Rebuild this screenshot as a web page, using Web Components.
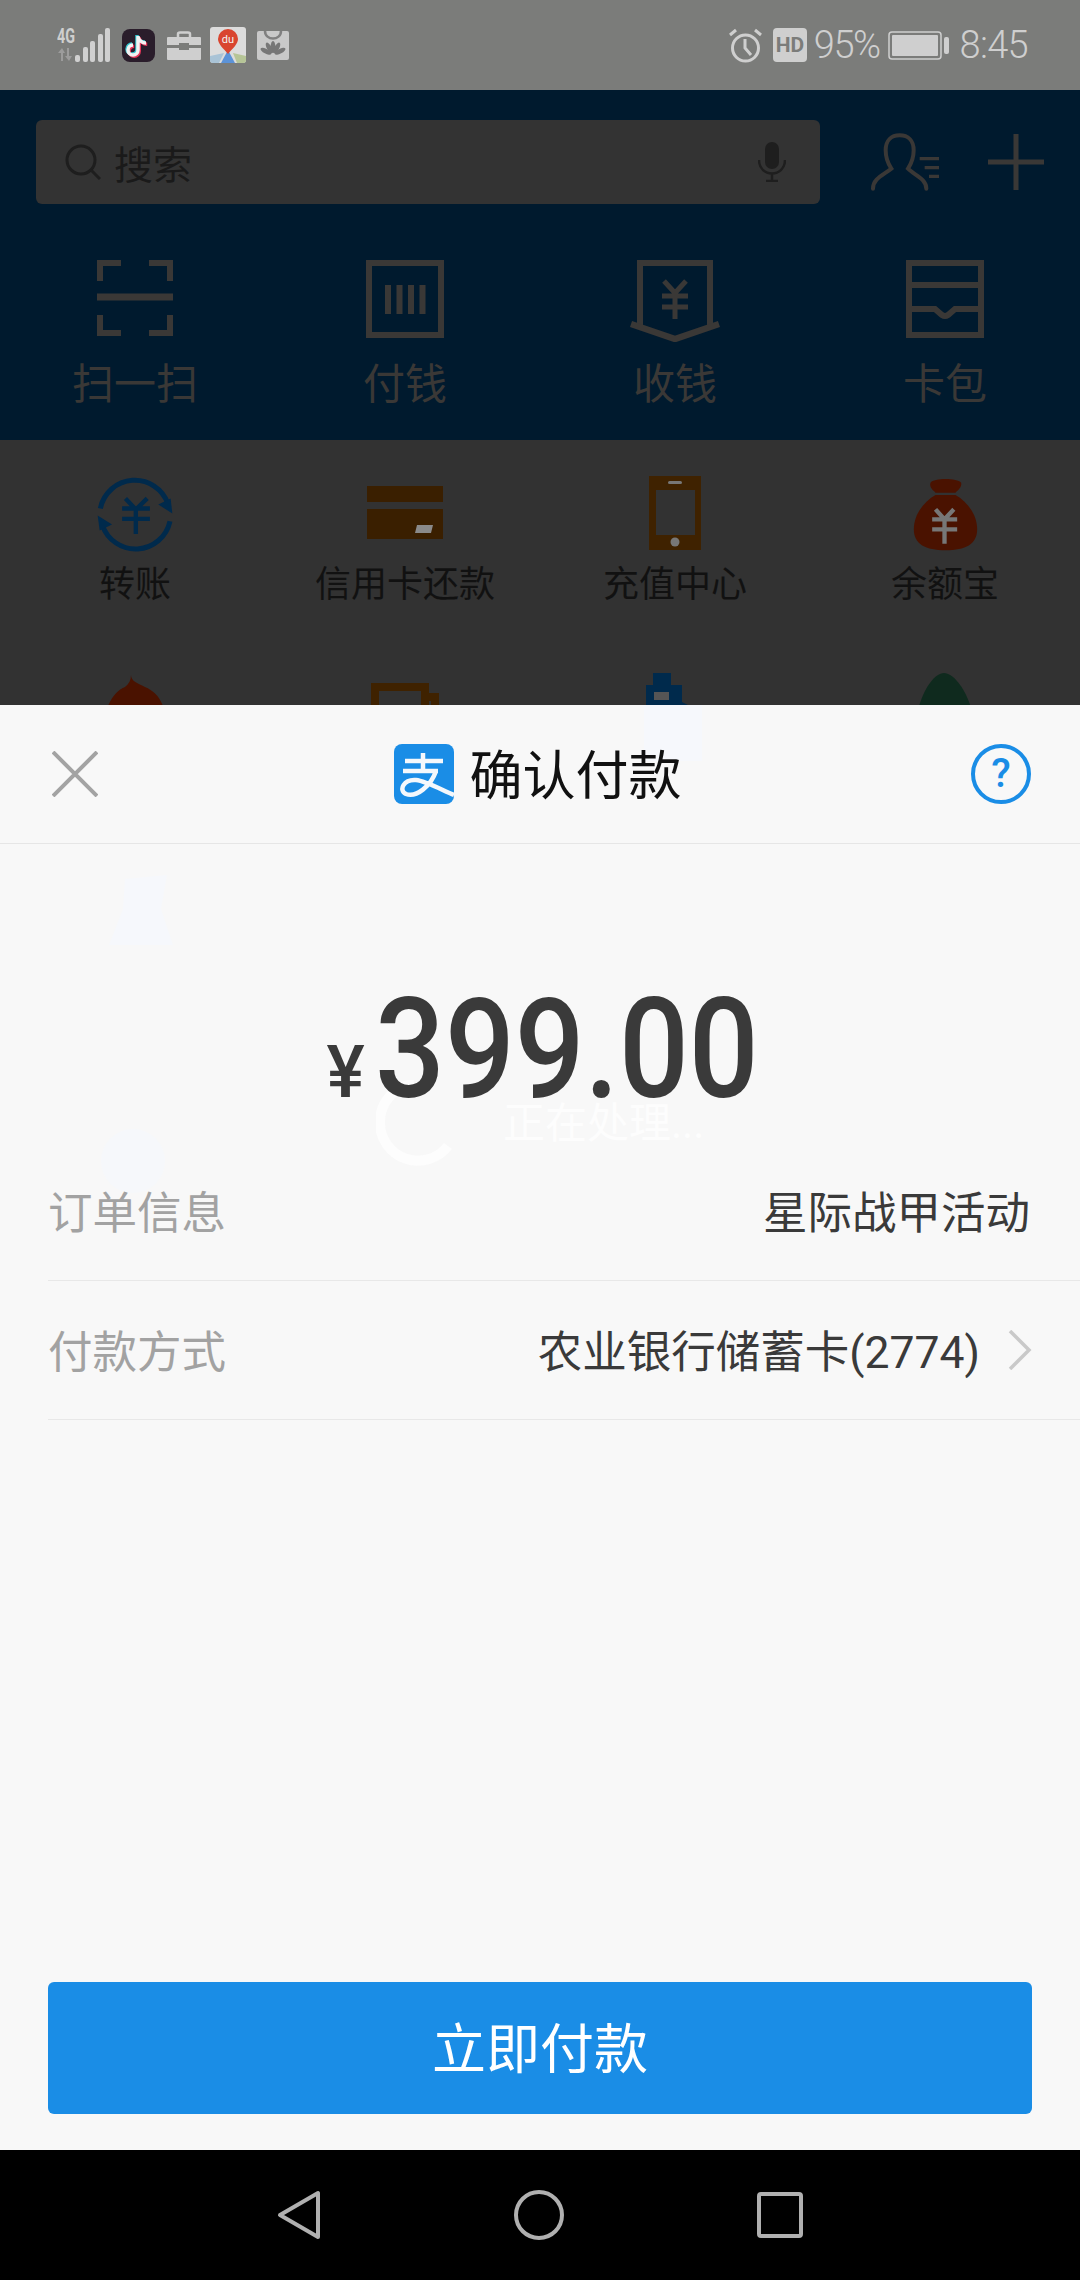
<!DOCTYPE html>
<html lang="zh">
<head>
<meta charset="utf-8">
<title>确认付款</title>
<style>
  html, body { margin: 0; padding: 0; }
  body {
    width: 1080px;
    height: 2280px;
    display: flex;
    flex-direction: column;
    overflow: hidden;
    font-family: Roboto, "Noto Sans CJK SC", sans-serif;
    background: #000;
  }
</style>
</head>
<body>

<status-bar></status-bar>

<home-screen>
  <search-row slot="search"></search-row>

  <home-tile slot="top" variant="top">
    <svg slot="icon" width="76" height="76" viewBox="0 0 76 76" fill="none" stroke="#3a3836" stroke-width="6">
      <path d="M3 21V3H24M52 3H73V21M3 55V73H24M52 73H73V55"/><path d="M0 37H76" stroke-width="7"/>
    </svg>
    扫一扫
  </home-tile>
  <home-tile slot="top" variant="top">
    <svg slot="icon" width="78" height="78" viewBox="0 0 78 78" fill="none" stroke="#3a3836" stroke-width="6">
      <rect x="3" y="3" width="72" height="72"/><path d="M22 25V54M33.500 25V54M45 25V54M56.500 25V54"/>
    </svg>
    付钱
  </home-tile>
  <home-tile slot="top" variant="top">
    <svg slot="icon" width="90" height="82" viewBox="0 0 90 82" fill="none" stroke="#3a3836" stroke-width="6">
      <path d="M10 66V3H80V66"/><path d="M1 64L45 79L89 64" stroke-width="6.500"/>
      <path d="M34 21L45 33L56 21M45 33V59M32 36H58M32 47H58" stroke-width="5"/>
    </svg>
    收钱
  </home-tile>
  <home-tile slot="top" variant="top">
    <svg slot="icon" width="78" height="78" viewBox="0 0 78 78" fill="none" stroke="#3a3836" stroke-width="6">
      <rect x="3" y="3" width="72" height="72"/><path d="M3 25H75M3 49H29L36 55Q39 57 42 55L49 49H75"/>
    </svg>
    卡包
  </home-tile>

  <home-tile slot="grid" variant="grid">
    <svg slot="icon" width="77" height="77" viewBox="20 15 230 230" fill="none" stroke="#002a4c" stroke-width="15">
      <path d="M30 112A105 105 0 0 1 232 98"/><path d="M238 150A105 105 0 0 1 36 162"/>
      <path d="M203 100L245 127L240 82Z" fill="#002a4c" stroke="none"/><path d="M65 160L22 133L28 178Z" fill="#002a4c" stroke="none"/>
      <path d="M105 82L136 115L170 82M136 115V188M95 112H178M95 143H178" stroke-width="13"/>
    </svg>
    转账
  </home-tile>
  <home-tile slot="grid" variant="grid">
    <svg slot="icon" width="76" height="64" viewBox="0 -10 76 64">
      <rect y="0" width="76" height="16" fill="#3a1f00"/><rect y="23" width="76" height="30" fill="#3a1f00"/>
      <path d="M50 39H66L64 47H48Z" fill="#8a8a8a"/>
    </svg>
    信用卡还款
  </home-tile>
  <home-tile slot="grid" variant="grid">
    <svg slot="icon" width="52" height="74" viewBox="0 0 52 74">
      <rect width="52" height="74" fill="#3f2200"/><rect x="7" y="14" width="39" height="45" fill="#323232"/>
      <rect x="19" y="5" width="14" height="3" rx="1.500" fill="#777"/><circle cx="26" cy="66" r="4.500" fill="#777"/>
    </svg>
    充值中心
  </home-tile>
  <home-tile slot="grid" variant="grid">
    <svg slot="icon" width="67" height="76" viewBox="815 15 200 228" fill="#4a1200">
      <path d="M870 35C880 20 950 20 962 35C965 50 950 58 945 65H885C880 58 865 50 870 35Z"/>
      <path d="M885 72H945C985 95 1010 135 1010 175C1010 220 975 238 915 238C855 238 820 220 820 175C820 135 845 95 885 72Z"/>
      <path d="M885 115L912 145L940 115M912 145V218M875 145H950M875 175H950" fill="none" stroke="#777" stroke-width="13"/>
    </svg>
    余额宝
  </home-tile>

  <home-tile slot="grid" variant="grid" style="margin-top:2px">
    <svg slot="icon" width="64" height="60" viewBox="0 0 64 60">
      <path d="M28 0C28 6 34 8 42 12C56 18 64 30 64 60H0C0 30 12 16 22 12C26 9 28 5 28 0Z" fill="#4a1200"/>
    </svg>
  </home-tile>
  <home-tile slot="grid" variant="grid" style="margin-top:10px">
    <svg slot="icon" width="68" height="60" viewBox="0 0 68 60" fill="none" stroke="#3f2200" stroke-width="8">
      <path d="M4 60V4H54V60M54 14H64V60"/>
    </svg>
  </home-tile>
  <home-tile slot="grid" variant="grid">
    <svg slot="icon" width="58" height="60" viewBox="0 0 58 60">
      <path d="M7 0H25V12H36V29L58 40V60H0V12H7Z" fill="#002a4c"/><rect x="8" y="19" width="15" height="8" fill="#555"/>
    </svg>
  </home-tile>
  <home-tile slot="grid" variant="grid">
    <svg slot="icon" width="60" height="60" viewBox="0 0 60 60">
      <path d="M29 0C42 0 60 30 60 60H0C0 30 16 0 29 0Z" fill="#0f2a1e"/>
    </svg>
  </home-tile>
</home-screen>

<pay-sheet>
  <sheet-header slot="header">确认付款</sheet-header>
  <pay-amount slot="amount">399.00</pay-amount>
  <sheet-row slot="rows" label="订单信息">星际战甲活动</sheet-row>
  <sheet-row slot="rows" label="付款方式" chevron>农业银行储蓄卡(2774)</sheet-row>
  <pay-button slot="action">立即付款</pay-button>
</pay-sheet>

<nav-bar></nav-bar>

<script>
const cjk = 'Roboto, "Noto Sans CJK SC", sans-serif'

customElements.define('status-bar', class StatusBar extends HTMLElement {
  constructor() {
    super()
    this.attachShadow({mode: 'open'})
    this.shadowRoot.innerHTML = this.template
  }

  get template() {
    return `
<style>
  :host {
    display: flex;
    align-items: center;
    height: 90px;
    flex: none;
    box-sizing: border-box;
    padding: 0 52px 0 57px;
    background: #7b7c7a;
    color: #cfcfcf;
    font-family: ${cjk};
  }
  .left, .right { display: flex; align-items: center; }
  .left { gap: 11px; }
  .right { margin-left: auto; }
  .num { font-size: 38px; font-weight: 300; line-height: 40px; letter-spacing: -1.500px; }
  .time { letter-spacing: -.700px; margin-left: 11px; }
  svg { display: block; flex: none; }
</style>
<div class="left">
  <svg width="54" height="47" viewBox="0 -12 54 47" style="margin-top:-12px">
    <text x="0" y="15" font-family="Roboto" font-size="20" font-weight="700" fill="#cfcfcf" textLength="18" lengthAdjust="spacingAndGlyphs">4G</text>
    <path d="M4 33V25H1L5 20L8 25H6V33ZM10 20V28H8L12 33L15 28H12V20Z" fill="#9c9c9c"/>
    <g fill="#d0d0d0">
      <rect x="18" y="27" width="5" height="7" rx="2"/><rect x="26" y="19" width="5" height="15" rx="2"/>
      <rect x="33" y="13" width="5" height="21" rx="2"/><rect x="41" y="6" width="5" height="28" rx="2"/><rect x="48" y="0" width="5" height="34" rx="2"/>
    </g>
  </svg>
  <svg width="33" height="33" viewBox="0 0 33 33" fill="none" stroke-width="3.500">
    <rect width="33" height="33" rx="8" fill="#2a1d2b"/>
    <path d="M16 7V21A5 5 0 1 1 11 16M16 8C17 11 20 14 24 14" stroke="#35c5cf" transform="translate(-1 -1)"/>
    <path d="M16 7V21A5 5 0 1 1 11 16M16 8C17 11 20 14 24 14" stroke="#e8375a" transform="translate(1.200 1.200)"/>
    <path d="M16 7V21A5 5 0 1 1 11 16M16 8C17 11 20 14 24 14" stroke="#f2f2f2"/>
  </svg>
  <svg width="34" height="29" viewBox="0 0 34 29" style="margin-left:1px">
    <path d="M11 7V3Q11 1.500 13 1.500H21Q23 1.500 23 3V7" fill="none" stroke="#cfcfcf" stroke-width="2.500"/>
    <path d="M1 6H33Q34 6 34 7V14H22V12H12V14H0V7Q0 6 1 6Z" fill="#cfcfcf"/>
    <path d="M0 17H12V19H22V17H34V28Q34 29 33 29H1Q0 29 0 28Z" fill="#cfcfcf"/>
  </svg>
  <svg width="36" height="36" viewBox="0 0 36 36" style="margin-left:-2px">
    <rect width="36" height="36" rx="3" fill="#dcdcdc"/>
    <path d="M0 29L14 26L9 36H3Q0 36 0 33Z" fill="#a9c3d6"/><path d="M36 29L23 26L27 36H33Q36 36 36 33Z" fill="#b6c597"/>
    <path d="M18 23L11 36H25Z" fill="#5c93d8"/>
    <path d="M18 27C13 21 8 17 8 12A10 10 0 0 1 28 12C28 17 23 21 18 27Z" fill="#d9452f"/>
    <text x="18" y="16" text-anchor="middle" font-family="Roboto" font-size="11" fill="#f2f2f2">du</text>
  </svg>
  <svg width="32" height="29" viewBox="0 0 32 29">
    <rect width="32" height="29" rx="2" fill="#c9c9c9"/>
    <path d="M8 0C8 10 24 10 24 0" fill="none" stroke="#808080" stroke-width="2.500"/>
    <g fill="#777">
      <ellipse cx="16" cy="16" rx="2.400" ry="6"/>
      <ellipse cx="16" cy="16" rx="2.400" ry="6" transform="rotate(-28 16 24)"/><ellipse cx="16" cy="16" rx="2.400" ry="6" transform="rotate(28 16 24)"/>
      <ellipse cx="16" cy="16" rx="2.400" ry="6" transform="rotate(-62 16 24)"/><ellipse cx="16" cy="16" rx="2.400" ry="6" transform="rotate(62 16 24)"/>
    </g>
  </svg>
</div>
<div class="right">
  <svg width="33" height="35" viewBox="0 0 33 35" fill="none" stroke="#cfcfcf" stroke-width="3">
    <circle cx="16.500" cy="20" r="13"/><path d="M16 11V20L22 27M1 7L7 2M32 7L26 2"/>
  </svg>
  <svg width="34" height="34" viewBox="0 0 34 34" style="margin-left:11px">
    <rect width="34" height="34" rx="4" fill="#cfcfcf"/>
    <text x="17" y="24" text-anchor="middle" font-family="Roboto" font-size="21" font-weight="700" fill="#7b7c7a">HD</text>
  </svg>
  <span class="num" style="margin-left:7px">95%</span>
  <svg width="61" height="29" viewBox="0 0 61 29" style="margin-left:8px">
    <rect x="1" y="1" width="52" height="27" rx="3" fill="none" stroke="#cfcfcf" stroke-width="1.500"/>
    <rect x="4" y="4" width="46" height="21" rx="1" fill="#cfcfcf"/>
    <rect x="56" y="6" width="5" height="17" rx="2" fill="#cfcfcf"/>
  </svg>
  <span class="num time">8:45</span>
</div>
    `
  }
})

customElements.define('search-row', class SearchRow extends HTMLElement {
  constructor() {
    super()
    this.attachShadow({mode: 'open'})
    this.shadowRoot.innerHTML = this.template
  }

  get template() {
    return `
<style>
  :host {
    display: flex;
    align-items: center;
    height: 84px;
    margin: 30px 0 0 36px;
  }
  .field {
    display: flex;
    align-items: center;
    width: 784px;
    height: 84px;
    box-sizing: border-box;
    padding: 0 34px 0 29px;
    background: #333;
    border-radius: 6px;
    color: #1a1a1a;
    font-size: 39px;
    font-family: ${cjk};
  }
  .text { margin-left: 13px; }
  .mic { margin-left: auto; }
  .user { margin-left: 48px; }
  .plus { margin-left: 45px; }
  svg { display: block; flex: none; }
</style>
<div class="field">
  <svg width="36" height="36" viewBox="0 0 36 36" fill="none" stroke="#1e1e1e" stroke-width="3">
    <circle cx="16" cy="16" r="14"/><path d="M26 26L35 35"/>
  </svg>
  <span class="text">搜索</span>
  <svg class="mic" width="28" height="40" viewBox="0 0 28 40" fill="none" stroke="#1e1e1e" stroke-width="2.500">
    <rect x="7" y="0" width="14" height="27" rx="7" fill="#1e1e1e" stroke="none"/>
    <path d="M1 18C1 36 27 36 27 18M14 32V39M8 39H20"/>
  </svg>
</div>
<svg class="user" width="75" height="60" viewBox="25 20 225 180" fill="none" stroke="#3a3836" stroke-width="12" stroke-linecap="round">
  <path d="M40 190C40 160 70 150 95 130C85 115 78 100 78 75C78 45 95 30 120 30C145 30 162 45 162 75C162 100 155 115 145 130C165 150 200 160 200 190"/>
  <path d="M180 100H238M195 127H238M208 153H238" stroke-width="10" stroke-linecap="butt"/>
</svg>
<svg class="plus" width="56" height="56" viewBox="0 0 56 56" fill="none" stroke="#3a3836" stroke-width="5">
  <path d="M28 0V56M0 28H56"/>
</svg>
    `
  }
})

customElements.define('home-screen', class HomeScreen extends HTMLElement {
  constructor() {
    super()
    this.attachShadow({mode: 'open'})
    this.shadowRoot.innerHTML = this.template
  }

  get template() {
    return `
<style>
  :host {
    display: flex;
    flex-direction: column;
    flex: none;
    height: 615px;
    overflow: hidden;
    background: #323232;
    font-family: ${cjk};
  }
  .head { height: 350px; flex: none; background: #001a2e; }
  .top, .grid { display: grid; grid-template-columns: repeat(4, 270px); }
  .top { margin-top: 56px; }
  .grid { padding-top: 36px; row-gap: 63px; }
</style>
<div class="head">
  <slot name="search"></slot>
  <div class="top"><slot name="top"></slot></div>
</div>
<div class="grid"><slot name="grid"></slot></div>
    `
  }
})

customElements.define('home-tile', class HomeTile extends HTMLElement {
  constructor() {
    super()
    this.attachShadow({mode: 'open'})
    this.shadowRoot.innerHTML = this.template
  }

  get template() {
    return `
<style>
  :host {
    display: flex;
    flex-direction: column;
    align-items: center;
    color: #111;
    font-size: 36px;
    line-height: 50px;
    --box: 76px;
    --label-gap: 8px;
  }
  :host([variant="top"]) {
    color: #3a3836;
    font-size: 42px;
    --box: 84px;
    --label-gap: 16px;
  }
  .icon { height: var(--box); margin-bottom: var(--label-gap); display: flex; align-items: flex-start; }
</style>
<div class="icon"><slot name="icon"></slot></div>
<slot></slot>
    `
  }
})

customElements.define('pay-sheet', class PaySheet extends HTMLElement {
  constructor() {
    super()
    this.attachShadow({mode: 'open'})
    this.shadowRoot.innerHTML = this.template
  }

  get template() {
    return `
<style>
  :host {
    display: flex;
    flex-direction: column;
    flex: none;
    height: 1445px;
    position: relative;
    isolation: isolate;
    background: #f8f8f8;
    font-family: ${cjk};
  }
  .rows { display: flex; flex-direction: column; }
  .grow { flex: 1; }
  .ghost { position: absolute; inset: 0; z-index: -1; }
  .ghost svg { position: absolute; }
  .loading {
    position: absolute;
    left: 503px;
    top: 400px;
    color: #fdfdfd;
    font-size: 42px;
    line-height: 38px;
    white-space: nowrap;
  }
</style>
<div class="ghost">
  <svg style="left:640px;top:0" width="66" height="62" viewBox="0 0 66 62"><rect x="4" width="58" height="56" fill="#f6f8fc"/></svg>
  <svg style="left:105px;top:170px" width="70" height="72" viewBox="0 0 70 72"><path d="M20 4L62 0L56 34L68 70H4L18 34Z" fill="#f6f8fc"/></svg>
  <svg style="left:75px;top:420px" width="110" height="70" viewBox="0 0 110 70"><circle cx="58" cy="36" r="32" fill="#f6f8fb"/></svg>
  <svg style="left:376px;top:375px" width="80" height="90" viewBox="0 0 80 90" fill="none" stroke="#fdfdfd" stroke-width="10">
    <path d="M38 4A38 38 0 0 0 4 42A38 38 0 0 0 72 66"/>
  </svg>
  <span class="loading">正在处理...</span>
</div>
<slot name="header"></slot>
<slot name="amount"></slot>
<div class="rows"><slot name="rows"></slot></div>
<div class="grow"></div>
<slot name="action"></slot>
    `
  }
})

customElements.define('sheet-header', class SheetHeader extends HTMLElement {
  constructor() {
    super()
    this.attachShadow({mode: 'open'})
    this.shadowRoot.innerHTML = this.template
  }

  get template() {
    return `
<style>
  :host {
    display: grid;
    grid-template-columns: 1fr auto 1fr;
    align-items: center;
    height: 139px;
    box-sizing: border-box;
    padding: 0 49px 0 52px;
    border-bottom: 1px solid #e6e6e6;
  }
  .title {
    display: flex;
    align-items: center;
    gap: 16px;
    color: #111;
    font-size: 53px;
    line-height: 62px;
    margin-left: -8px;
  }
  .title span { padding-top: 6px; }
  .help {
    justify-self: end;
    width: 60px;
    height: 60px;
    box-sizing: border-box;
    border: 4px solid #1a8de6;
    border-radius: 50%;
    display: flex;
    align-items: center;
    justify-content: center;
    color: #1a8de6;
    font-size: 40px;
    font-weight: 500;
    line-height: 1;
  }
  svg { display: block; flex: none; }
</style>
<svg width="46" height="46" viewBox="0 0 46 46" fill="none" stroke="#a3a3a3" stroke-width="4">
  <path d="M1 1L45 45M45 1L1 45"/>
</svg>
<div class="title">
  <svg width="60" height="60" viewBox="0 0 60 60">
    <rect width="60" height="60" rx="8" fill="#1a8de6"/>
    <path d="M11 17H49M29 9V27M9 27H44M42 27C37 42 22 54 12 50C4 46 10 35 22 36C32 37 48 46 60 51" fill="none" stroke="#f4f8fc" stroke-width="4.500"/>
  </svg>
  <span><slot></slot></span>
</div>
<div class="help">?</div>
    `
  }
})

customElements.define('pay-amount', class PayAmount extends HTMLElement {
  constructor() {
    super()
    this.attachShadow({mode: 'open'})
    this.shadowRoot.innerHTML = this.template
  }

  get template() {
    return `
<style>
  :host {
    display: flex;
    align-items: baseline;
    justify-content: center;
    height: 298px;
    box-sizing: border-box;
    padding: 156px 0 0 2px;
    color: #3a3a3a;
    font-family: Roboto, sans-serif;
    font-weight: 500;
  }
  .yen { font-size: 72px; line-height: 72px; width: 36px; margin-right: 12px; }
  .box { width: 381px; height: 100px; font-size: 139px; line-height: 100px; }
  .value { display: inline-block; white-space: nowrap; transform-origin: 0 50%; transform: scaleX(.885); }
</style>
<span class="yen">¥</span>
<span class="box"><span class="value"><slot></slot></span></span>
    `
  }
})

customElements.define('sheet-row', class SheetRow extends HTMLElement {
  constructor() {
    super()
    this.attachShadow({mode: 'open'})
    this.shadowRoot.innerHTML = this.template
    this.shadowRoot.querySelector('.label').textContent = this.getAttribute('label')
    if (!this.hasAttribute('chevron')) this.shadowRoot.querySelector('svg').remove()
  }

  get template() {
    return `
<style>
  :host {
    display: flex;
    align-items: center;
    height: 139px;
    box-sizing: border-box;
    margin-left: 48px;
    padding-right: 50px;
    border-bottom: 1px solid #e8e8e8;
    font-size: 44.500px;
    line-height: 56px;
  }
  .label { color: #a2a2a2; padding-top: 5px; }
  .value { margin-left: auto; color: #3a3a3a; padding-top: 5px; }
  svg { display: block; flex: none; margin-left: 28px; margin-right: -2px; }
</style>
<span class="label"></span>
<span class="value"><slot></slot></span>
<svg width="24" height="40" viewBox="0 0 24 40" fill="none" stroke="#c9c9c9" stroke-width="3.500">
  <path d="M2 1L21 20L2 39"/>
</svg>
    `
  }
})

customElements.define('pay-button', class PayButton extends HTMLElement {
  constructor() {
    super()
    this.attachShadow({mode: 'open'})
    this.shadowRoot.innerHTML = this.template
  }

  get template() {
    return `
<style>
  :host {
    display: flex;
    align-items: center;
    justify-content: center;
    height: 132px;
    box-sizing: border-box;
    padding-top: 5px;
    margin: 0 48px 36px;
    border-radius: 6px;
    background: #1a8de6;
    color: #fff;
    font-size: 54px;
    line-height: 62px;
  }
</style>
<slot></slot>
    `
  }
})

customElements.define('nav-bar', class NavBar extends HTMLElement {
  constructor() {
    super()
    this.attachShadow({mode: 'open'})
    this.shadowRoot.innerHTML = this.template
  }

  get template() {
    return `
<style>
  :host {
    display: flex;
    align-items: center;
    justify-content: center;
    gap: 193px;
    flex: none;
    height: 130px;
    background: #000;
  }
  svg { display: block; flex: none; }
</style>
<svg width="44" height="50" viewBox="0 0 44 50" fill="none" stroke="#b0b0b0" stroke-width="4" stroke-linejoin="round">
  <path d="M41 3V47L3 25Z"/>
</svg>
<svg width="50" height="50" viewBox="0 0 50 50" fill="none" stroke="#b0b0b0" stroke-width="4">
  <circle cx="25" cy="25" r="23"/>
</svg>
<svg width="46" height="46" viewBox="0 0 46 46" fill="none" stroke="#b0b0b0" stroke-width="4">
  <rect x="2" y="2" width="42" height="42" rx="2"/>
</svg>
    `
  }
})
</script>
</body>
</html>
